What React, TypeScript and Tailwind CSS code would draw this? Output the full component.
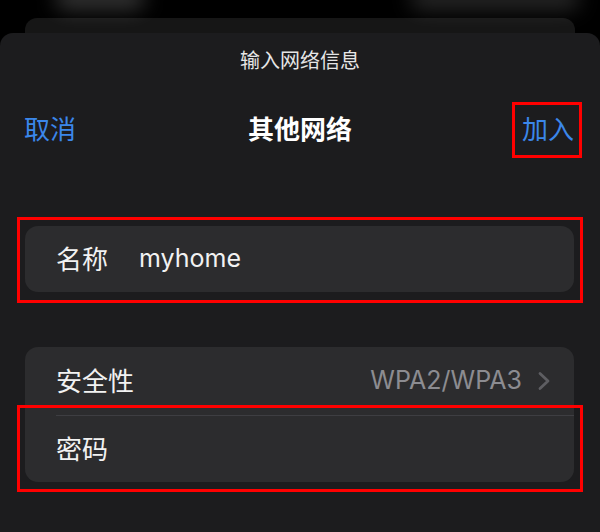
const font = { fontFamily: 'Inter, "Noto Sans CJK SC", sans-serif' }

function Chevron() {
  return (
    <svg width="14" height="20" viewBox="0 0 14 20" fill="none">
      <path d="M3 2.5l8 7.5-8 7.5" stroke="#5e5e62" strokeWidth="2.8" strokeLinecap="round" strokeLinejoin="round" />
    </svg>
  )
}

export default function App() {
  return (
    <div className="relative w-[600px] h-[532px] bg-black overflow-hidden flex flex-col" style={font}>
      {/* blurred content behind the sheet */}
      <div className="absolute left-[55px] top-[-14px] w-[90px] h-[24px] rounded-full bg-white/20 blur-[10px]" />
      <div className="absolute left-[410px] top-[-14px] w-[170px] h-[24px] rounded-full bg-white/15 blur-[10px]" />

      <div className="mx-[25px] mt-[18px] h-[15px] rounded-t-[12px] bg-[#161616]" />

      <div className="flex-1 rounded-t-[13px] bg-[#1c1c1e] flex flex-col">
        <p className="pt-[16px] text-center text-[20px] leading-[24px] text-[#e6e6e6]">输入网络信息</p>

        <div className="mt-[29px] h-[56px] px-[18px] grid grid-cols-[1fr_auto_1fr] items-center">
          <button className="justify-self-start ml-[6px] text-[26px] leading-none text-[#3b87ea]">取消</button>
          <h1 className="text-[26px] leading-none font-bold text-white">其他网络</h1>
          <button className="justify-self-end h-[56px] border-[3px] border-[#ff0000] pl-[7px] pr-[5px] text-[26px] leading-none text-[#3b87ea]">
            加入
          </button>
        </div>

        <div className="mt-[59px] mx-[17px] border-[3px] border-[#ff0000] pt-[6px] pb-[8px] pl-[5px] pr-[6px]">
          <div className="h-[66px] rounded-[13px] bg-[#2c2c2e] pl-[31px] flex items-center text-[#f2f2f2]">
            <span className="w-[83px] text-[26px]">名称</span>
            <span className="text-[25px]">myhome</span>
          </div>
        </div>

        <div className="relative mt-[44px] ml-[25px] mr-[26px] rounded-[13px] bg-[#2c2c2e] text-[#f2f2f2]">
          <div className="h-[68px] pl-[31px] pr-[23px] flex items-center">
            <span className="flex-1 text-[26px]">安全性</span>
            <span className="text-[25px] text-[#8c8c91] mr-[15px]">WPA2/WPA3</span>
            <Chevron />
          </div>
          <div className="ml-[31px] h-px bg-[#3e3e42]" />
          <div className="h-[66px] pl-[31px] flex items-center">
            <span className="text-[26px]">密码</span>
          </div>
          <div className="absolute left-[-8px] right-[-9px] top-[58px] bottom-[-10px] border-[3px] border-[#ff0000]" />
        </div>
      </div>
    </div>
  )
}
